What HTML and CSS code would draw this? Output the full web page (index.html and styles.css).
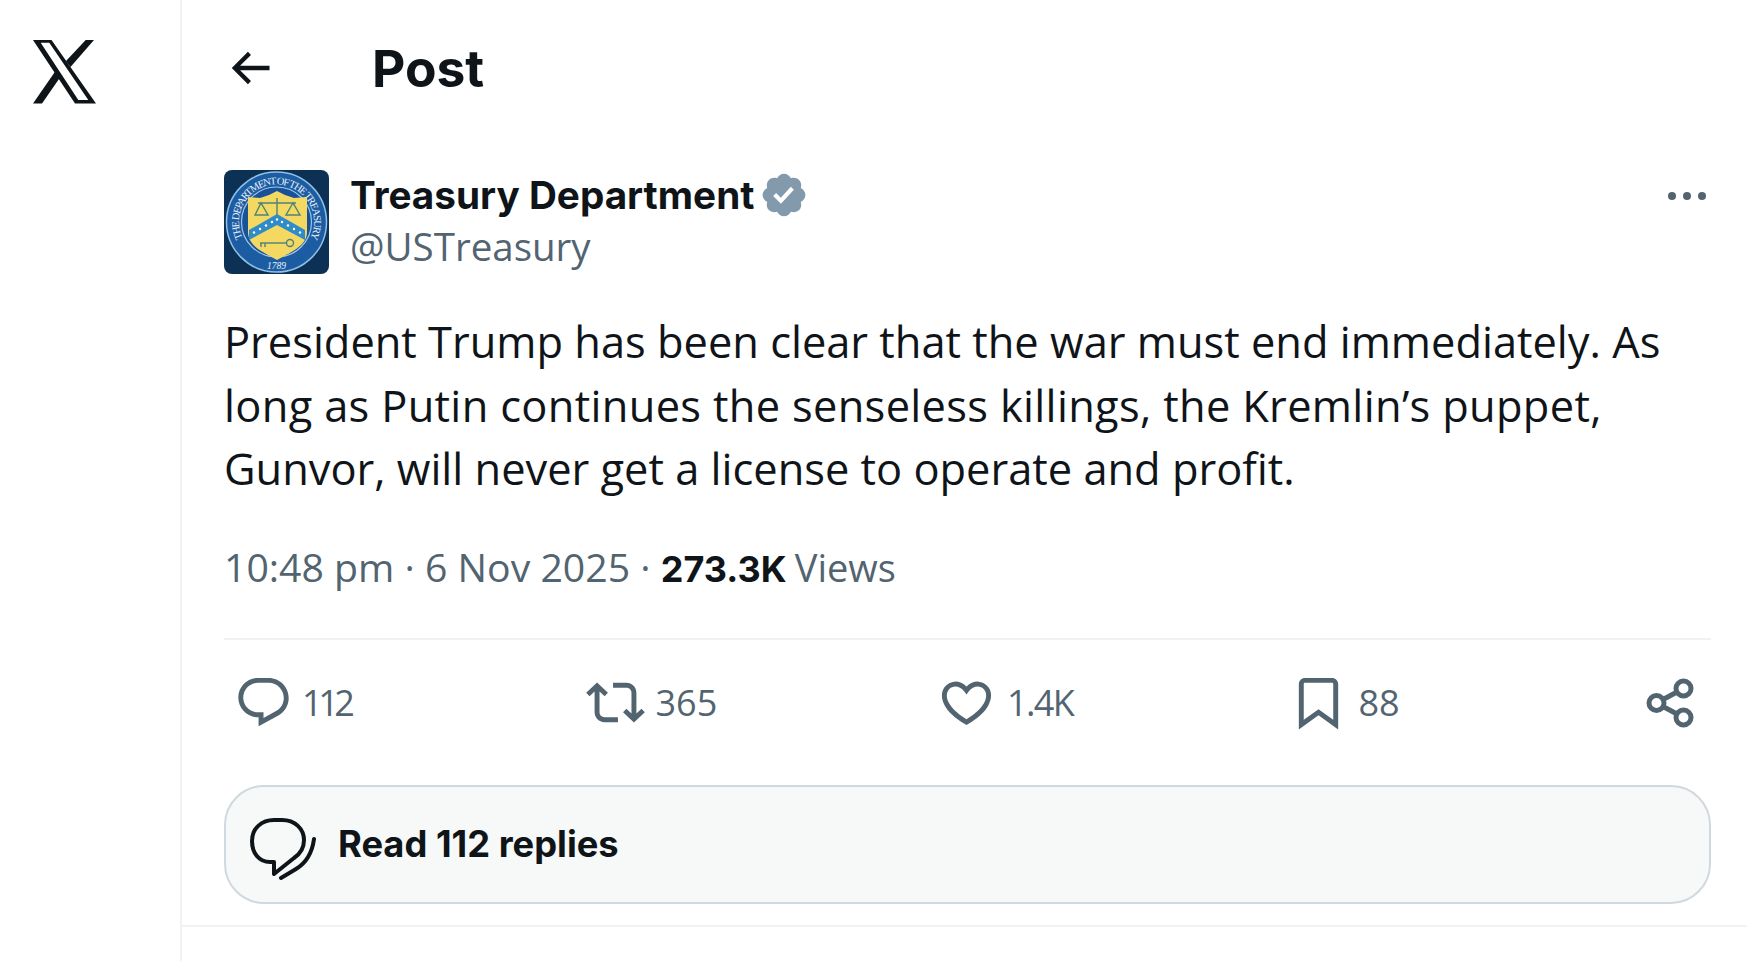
FILE: index.html
```html
<!DOCTYPE html>
<html lang="en">
<head>
<meta charset="utf-8">
<title>Post</title>
<link rel="stylesheet" href="styles.css">
</head>
<body>
<div class="page">
  <aside class="rail">
    <svg class="logo" viewBox="0 0 63 64"><path fill-rule="evenodd" d="M0 0 H18.5 L63 63.5 H42 Z M7.7 2.7 L45.3 60 H55.3 L16.3 2.7 Z"/><path d="M52.7 0 H61 L37.5 27 L33 21 Z M22.5 31 L27 37.5 L9 63.5 H0 Z"/></svg>
  </aside>
  <main class="main">
    <header class="topbar">
      <svg class="back" viewBox="0 0 24 24"><path d="M7.414 13l5.043 5.04-1.414 1.42L3.586 12l7.457-7.46 1.414 1.42L7.414 11H21v2H7.414z"/></svg>
      <h1 class="title">Post</h1>
    </header>
    <article class="post">
      <div class="author">
        <svg class="avatar" viewBox="0 0 105 104">
          <defs><path id="seal-arc" d="M18.6 68 A37.5 37.5 0 1 1 86.4 68"/></defs>
          <rect width="105" height="104" rx="8" fill="#0c3154"/>
          <circle cx="52.5" cy="52" r="50" fill="#1c5ca2" stroke="#8fc0e6" stroke-width="1.5"/>
          <circle cx="52.5" cy="52" r="35" fill="#1a5299" stroke="#9cc7e8" stroke-width="1.2"/>
          <text class="seal-text" fill="#e6f1fa"><textPath href="#seal-arc" textLength="151">THE DEPARTMENT OF THE TREASURY</textPath></text>
          <text class="seal-year" x="52.5" y="99" text-anchor="middle" fill="#e6f1fa">1789</text>
          <path d="M24 27 L36 28 L45 25 L53 21 L61 25 L70 28 L83 27 V62 C83 76 67 82 53 90 C39 82 24 76 24 62 Z" fill="#f3d862"/>
          <path d="M25 60 L53 44 L81 60 V70 L53 55 L25 70 Z" fill="#2f8cc8"/>
          <g fill="#fff"><circle cx="30" cy="62.500" r="1.200"/><circle cx="36" cy="59" r="1.200"/><circle cx="42" cy="55.500" r="1.200"/><circle cx="48" cy="52" r="1.200"/><circle cx="53" cy="49.500" r="1.200"/><circle cx="58" cy="52" r="1.200"/><circle cx="64" cy="55.500" r="1.200"/><circle cx="70" cy="59" r="1.200"/><circle cx="76" cy="62.500" r="1.200"/></g>
          <g fill="none" stroke="#4f8279" stroke-width="1.400">
            <path d="M34 33 H72 M53 28 V45 M37 33 L31 45 H44 Z M69 33 L62 45 H76 Z"/>
            <path d="M36 73 H63"/>
            <circle cx="66" cy="73" r="3.500"/>
            <path d="M37 73 v4 M41 73 v4"/>
          </g>
        </svg>
        <div class="identity">
          <div class="name-row">
            <span class="name">Treasury Department</span>
            <svg class="badge" viewBox="0 0 24 24"><path d="M22.25 12c0-1.43-.88-2.67-2.19-3.34.46-1.39.2-2.9-.81-3.91s-2.52-1.27-3.91-.81c-.66-1.31-1.91-2.19-3.34-2.19s-2.67.88-3.33 2.19c-1.4-.46-2.91-.2-3.92.81s-1.26 2.52-.8 3.91c-1.31.67-2.2 1.91-2.2 3.34s.89 2.67 2.2 3.34c-.46 1.39-.21 2.9.8 3.91s2.52 1.26 3.91.81c.67 1.31 1.91 2.19 3.34 2.19s2.68-.88 3.34-2.19c1.39.45 2.9.2 3.91-.81s1.27-2.52.81-3.91c1.31-.67 2.19-1.91 2.19-3.34zm-11.71 4.2L6.8 12.46l1.41-1.42 2.26 2.26 4.8-5.23 1.47 1.36-6.2 6.77z"/></svg>
          </div>
          <div class="handle">@USTreasury</div>
        </div>
        <svg class="more" viewBox="0 0 38 8"><circle cx="4" cy="4" r="4"/><circle cx="19" cy="4" r="4"/><circle cx="34" cy="4" r="4"/></svg>
      </div>
      <p class="text">President Trump has been clear that the war must end immediately. As<br><span class="line-wide">long as Putin continues the senseless killings, the Kremlin’s puppet,</span><br>Gunvor, will never get a license to operate and profit.</p>
      <div class="meta">10:48 pm · 6 Nov 2025 · <strong class="views">273.3K</strong> <span class="views-label">Views</span></div>
      <div class="actions">
        <div class="action">
          <svg class="icon" viewBox="0 0 24 24"><path d="M1.751 10c0-4.42 3.584-8 8.005-8h4.366c4.49 0 8.129 3.64 8.129 8.13 0 2.96-1.607 5.68-4.196 7.11l-8.054 4.46v-3.69h-.067c-4.49.1-8.183-3.51-8.183-8.01zm8.005-6c-3.317 0-6.005 2.69-6.005 6 0 3.37 2.77 6.08 6.138 6.01l.351-.01h1.761v2.3l5.087-2.81c1.951-1.08 3.163-3.13 3.163-5.36 0-3.39-2.744-6.13-6.129-6.13H9.756z"/></svg>
          <span class="count count-tight">112</span>
        </div>
        <div class="action">
          <svg class="icon" viewBox="0 0 24 24"><path d="M4.5 3.88l4.432 4.14-1.364 1.46L5.5 7.55V16c0 1.1.896 2 2 2H13v2H7.5c-2.209 0-4-1.79-4-4V7.55L1.432 9.48.068 8.02 4.5 3.88zM16.5 6H11V4h5.5c2.209 0 4 1.79 4 4v8.45l2.068-1.93 1.364 1.46-4.432 4.14-4.432-4.14 1.364-1.46 2.068 1.93V8c0-1.1-.896-2-2-2z"/></svg>
          <span class="count">365</span>
        </div>
        <div class="action">
          <svg class="icon" viewBox="0 0 24 24"><path d="M16.697 5.5c-1.222-.06-2.679.51-3.89 2.16l-.805 1.09-.806-1.09C9.984 6.01 8.526 5.44 7.304 5.5c-1.243.07-2.349.78-2.91 1.91-.552 1.12-.633 2.78.479 4.82 1.074 1.97 3.257 4.27 7.129 6.61 3.87-2.34 6.052-4.64 7.126-6.61 1.111-2.04 1.03-3.7.477-4.82-.561-1.13-1.666-1.84-2.908-1.91zm4.187 7.69c-1.351 2.48-4.001 5.12-8.379 7.67l-.503.3-.504-.3c-4.379-2.55-7.029-5.19-8.382-7.67-1.36-2.5-1.41-4.86-.514-6.67.887-1.79 2.647-2.91 4.601-3.01 1.651-.09 3.368.56 4.798 2.01 1.429-1.45 3.146-2.1 4.796-2.01 1.954.1 3.714 1.22 4.601 3.01.896 1.81.846 4.17-.514 6.67z"/></svg>
          <span class="count count-snug">1.4K</span>
        </div>
        <div class="action">
          <svg class="icon" viewBox="0 0 24 24"><path d="M4 4.5C4 3.12 5.119 2 6.5 2h11C18.881 2 20 3.12 20 4.5v18.44l-8-5.71-8 5.71V4.5zM6.5 4c-.276 0-.5.22-.5.5v14.56l6-4.29 6 4.29V4.5c0-.28-.224-.5-.5-.5h-11z"/></svg>
          <span class="count">88</span>
        </div>
        <div class="action">
          <svg class="icon share" viewBox="0 0 59 59"><circle cx="43.5" cy="15.5" r="7.5"/><circle cx="16.5" cy="30" r="7.5"/><circle cx="43.5" cy="44.5" r="7.5"/><path d="M23 26.5 L37 19 M23 33.5 L37 41"/></svg>
        </div>
      </div>
      <div class="read">
        <svg class="read-icon" viewBox="0 0 66 63"><path d="M24 56 V44 H20 C9 44 2 35 2 23 C2 10 12 2 24 2 H32 C45 2 54 11 54 22 C54 30 50 36 44 40 Z"/><path d="M31 60 L46 51 C56 45 62 36 64 21"/></svg>
        <span class="read-label">Read 112 replies</span>
      </div>
    </article>
  </main>
</div>
</body>
</html>
```

FILE: styles.css
```css
* { box-sizing: border-box; }

html, body {
  margin: 0;
  height: 100%;
  background: #fff;
  overflow: hidden;
}

body {
  font-family: "Open Sans", "Noto Sans", sans-serif;
  color: #0f1419;
}

.page {
  display: flex;
  align-items: stretch;
  height: 100%;
}

.rail {
  flex: 0 0 182px;
  padding: 40px 0 0 33px;
  border-right: 2px solid #eff3f4;
}

.logo {
  display: block;
  width: 63px;
  height: 64px;
  fill: #0f1419;
}

.main {
  flex: 1;
  align-self: flex-start;
  border-bottom: 2px solid #eff3f4;
  height: 927px;
}

.topbar {
  display: flex;
  align-items: center;
  gap: 96px;
  height: 136px;
  padding-left: 42px;
}

.back {
  width: 52px;
  height: 52px;
  fill: #0f1419;
}

.title {
  margin: 0;
  font-family: Inter, sans-serif;
  font-size: 51.5px;
  line-height: 56px;
  font-weight: 700;
}

.post {
  padding: 34px 36px 0 42px;
}

.author {
  display: flex;
  gap: 21px;
  height: 104px;
}

.avatar {
  flex: 0 0 105px;
  width: 105px;
  height: 104px;
}

.seal-text {
  font-family: "Liberation Serif", serif;
  font-size: 10.5px;
}

.seal-year {
  font-family: "Liberation Serif", serif;
  font-size: 9.5px;
  font-style: italic;
}

.identity {
  flex: 1;
}

.name-row {
  display: flex;
  align-items: center;
  gap: 5px;
  height: 50px;
}

.name {
  font-family: Inter, sans-serif;
  font-size: 38.7px;
  line-height: 50px;
  font-weight: 700;
}

.badge {
  width: 50px;
  height: 50px;
  fill: #829aab;
}

.handle {
  margin-top: 1px;
  font-size: 38.5px;
  line-height: 50px;
  color: #536471;
}

.more {
  flex: 0 0 38px;
  width: 38px;
  height: 8px;
  margin: 22px 5px 0 0;
  fill: #536471;
}

.text {
  margin: 36px 0 0;
  font-size: 43.4px;
  line-height: 63.5px;
}

.line-wide {
  letter-spacing: 0.33px;
}

.meta {
  margin-top: 41px;
  font-size: 39.2px;
  line-height: 50px;
  color: #536471;
}

.views {
  font-family: Inter, sans-serif;
  font-weight: 700;
  font-size: 36px;
  color: #0f1419;
}

.views-label {
  margin-left: -2px;
  font-size: 38px;
}

.actions {
  display: grid;
  grid-template-columns: repeat(4, 351.5px) auto;
  align-items: center;
  height: 128px;
  margin-top: 44px;
  padding-left: 10px;
  border-top: 2px solid #eff3f4;
}

.action {
  display: flex;
  align-items: center;
  gap: 11px;
}

.icon {
  flex: 0 0 59px;
  width: 59px;
  height: 59px;
  fill: #536471;
}

.share {
  fill: none;
  stroke: #536471;
  stroke-width: 5;
}

.count {
  font-size: 36px;
  line-height: 40px;
  color: #536471;
}

.count-tight {
  margin-left: -2px;
  letter-spacing: -4.4px;
}

.count-snug {
  letter-spacing: -1.6px;
}

.read {
  display: flex;
  align-items: center;
  gap: 22px;
  height: 119px;
  margin-top: 19px;
  padding-left: 24px;
  background: #f7f8f8;
  border: 2px solid #cfd9de;
  border-radius: 40px;
}

.read-icon {
  flex: 0 0 66px;
  width: 66px;
  height: 63px;
  margin-top: 11px;
  fill: none;
  stroke: #0f1419;
  stroke-width: 4;
  stroke-linejoin: round;
  stroke-linecap: round;
}

.read-label {
  font-family: Inter, sans-serif;
  font-size: 36.3px;
  line-height: 44px;
  font-weight: 700;
}
```
